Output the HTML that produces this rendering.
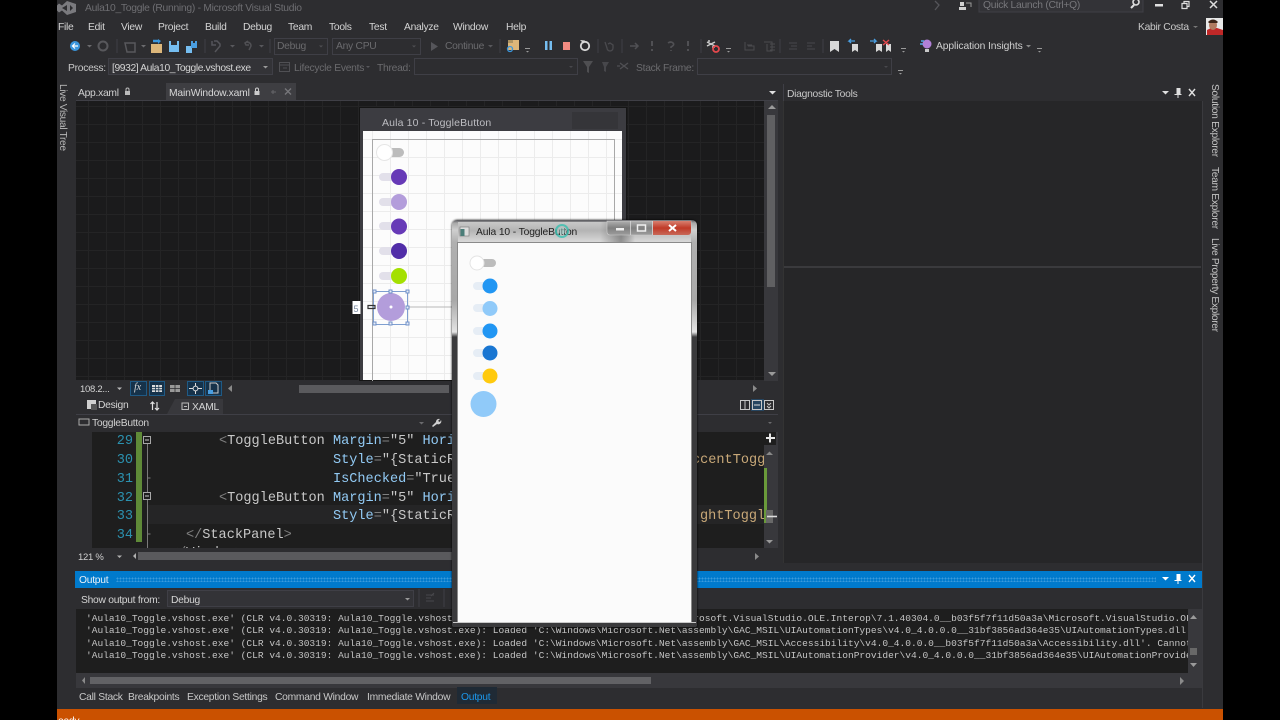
<!DOCTYPE html>
<html><head><meta charset="utf-8">
<style>
html,body{margin:0;padding:0;background:#000;width:1280px;height:720px;overflow:hidden}
#r{position:absolute;left:0;top:0;width:1280px;height:720px;overflow:hidden;background:#000;filter:blur(.35px);font-family:"Liberation Sans",sans-serif;font-size:10.3px;letter-spacing:-.27px;color:#d4d4d4}
.a{position:absolute}
.t{position:absolute;white-space:pre;line-height:14px;margin-top:1.500px}
.d{color:#6b6b6e}
.v{position:absolute;writing-mode:vertical-rl;white-space:pre;line-height:12px;color:#c4c4c4}
.m{position:absolute;white-space:pre;font-family:"Liberation Mono",monospace;font-size:13.57px;letter-spacing:0;line-height:19px;color:#c8c8c8;margin-top:1px}
.o{position:absolute;left:86px;white-space:pre;font-family:"Liberation Mono",monospace;font-size:9.55px;letter-spacing:0;line-height:12px;color:#c4c4c4;margin-top:.7px}
.b{color:#92caf4}.g{color:#808080}.n{color:#2b91af;text-align:right;width:30px;left:103px}
.y{color:#c8a878}
svg{position:absolute;overflow:visible}
</style></head><body><div id="r">

<div class="a" style="left:57px;top:0;width:1166px;height:710px;background:#2d2d30"></div>
<div class="a" style="left:57px;top:709px;width:1166px;height:11px;background:#ca5100"></div>
<div class="t" style="left:58px;top:713px;color:#fff">eady</div>

<!-- title -->
<svg style="left:0;top:0" width="1280" height="720">
<path d="M59 3.500l3 2 5-4.500 9 3v8l-9 3-5-4.500-3 2-2-2v-5zM62 8l5 3v-6zM70 5v6l3-3z" fill="#7a7a7e" fill-rule="evenodd"/>
<path d="M935 1l4 4-4 5" fill="none" stroke="#55555a" stroke-width="1.300"/>
<rect x="960" y="2" width="4" height="4" fill="#cfcfcf"/><path d="M959 10v-3h7v3z" fill="#cfcfcf"/><path d="M966 3h5v4" stroke="#9a9a9a" fill="none"/>
<rect x="979" y="-1" width="164" height="13" fill="#333337" stroke="#3f3f46"/>
<circle cx="1136" cy="2" r="3" fill="none" stroke="#ddd" stroke-width="1.600"/><path d="M1134 5l-3 3" stroke="#ddd" stroke-width="2"/>
<rect x="1155" y="4" width="8" height="2.500" fill="#e0e0e0"/>
<path d="M1182 3.500h5v5h-5zM1184 3.500v-2h5v5h-2" fill="none" stroke="#ddd" stroke-width="1.200"/>
<path d="M1210 1l7 7M1217 1l-7 7" stroke="#ddd" stroke-width="1.500"/>
</svg>
<div class="t" style="left:85px;top:0;color:#6e6e72">Aula10_Toggle (Running) - Microsoft Visual Studio</div>
<div class="t" style="left:983px;top:-3px;color:#77777b">Quick Launch (Ctrl+Q)</div>

<!-- menu -->
<div class="t" style="left:58px;top:19px">File</div>
<div class="t" style="left:88px;top:19px">Edit</div>
<div class="t" style="left:121px;top:19px">View</div>
<div class="t" style="left:158px;top:19px">Project</div>
<div class="t" style="left:205px;top:19px">Build</div>
<div class="t" style="left:243px;top:19px">Debug</div>
<div class="t" style="left:288px;top:19px">Team</div>
<div class="t" style="left:329px;top:19px">Tools</div>
<div class="t" style="left:369px;top:19px">Test</div>
<div class="t" style="left:404px;top:19px">Analyze</div>
<div class="t" style="left:453px;top:19px">Window</div>
<div class="t" style="left:506px;top:19px">Help</div>
<div class="t" style="left:1138px;top:19px;color:#c8c8c8">Kabir Costa</div>
<svg style="left:0;top:0" width="1280" height="720">
<path d="M1193 26h5l-2.500 2z" fill="#777"/>
<rect x="1206" y="18" width="17" height="17" fill="#e8e8e8"/>
<path d="M1207 35v-5l4-2h6l6 2v5z" fill="#c02828"/><ellipse cx="1213" cy="25" rx="4" ry="5" fill="#b07a60"/><path d="M1208 22q5-5 10 0l-1 1h-8z" fill="#3c2418"/>
</svg>

<!-- toolbar 1 -->
<svg style="left:0;top:0" width="1280" height="720">
<circle cx="75" cy="46" r="5" fill="#3a96dd"/><path d="M78 46h-5M75 43.500l-2.500 2.500 2.500 2.500" stroke="#fff" stroke-width="1.200" fill="none"/>
<path d="M87 45h5l-2.500 2.500z" fill="#6b6b6e"/>
<circle cx="103" cy="46" r="4.500" fill="none" stroke="#58585c" stroke-width="2"/>
<path d="M117 39v14" stroke="#3f3f46"/>
<path d="M125 43h10v9h-8z" fill="none" stroke="#58585c" stroke-width="1.500"/>
<path d="M141 45h5l-2.500 2.500z" fill="#6b6b6e"/>
<path d="M151 44h11v9h-11z" fill="#dcb67a"/><path d="M153 41h6" stroke="#3a96dd" stroke-width="2.500"/><path d="M158 39l3 2-3 3" fill="#3a96dd"/>
<path d="M169 41h10v11h-10z" fill="#75bdf0"/><rect x="171" y="41" width="6" height="4" fill="#2d2d30"/>
<path d="M186 46h6v7h-6z" fill="#75bdf0"/><path d="M191 41h6v7h-6z" fill="#4a9ee0"/><rect x="193" y="41" width="2" height="2" fill="#2d2d30"/>
<path d="M205 39v14" stroke="#3f3f46"/>
<path d="M214 41h3l3 3v2l-5 6M212 41l0 4 4 0" fill="none" stroke="#55555a" stroke-width="1.500"/>
<path d="M230 45h5l-2.500 2.500z" fill="#58585c"/>
<path d="M248 41l-3 2 1 2h3M246 42q5 0 5 4l-2 4" fill="none" stroke="#505054" stroke-width="1.500"/>
<path d="M259 45h5l-2.500 2.500z" fill="#58585c"/>
<path d="M270 39v14" stroke="#3f3f46"/>
<rect x="274.500" y="38.500" width="53" height="16" fill="#2d2d30" stroke="#3f3f46"/>
<path d="M319 45.500h4l-2 2z" fill="#4f4f52"/>
<rect x="332.500" y="38.500" width="88" height="16" fill="#2d2d30" stroke="#3f3f46"/>
<path d="M412 45.500h4l-2 2z" fill="#4f4f52"/>
<path d="M431 42v9l7-4.500z" fill="#55555a"/>
<path d="M488 45h5l-2.500 2.500z" fill="#58585c"/>
<path d="M500 39v14" stroke="#3f3f46"/>
<rect x="508" y="40" width="11" height="10" fill="#dcb67a"/><path d="M508 40h5v3h-5z" fill="#ad9362"/>
<circle cx="510" cy="49" r="2.500" fill="none" stroke="#3a96dd" stroke-width="1.300"/>
<path d="M525 48h5v1h-5zM526 51h3l-1.500 1.500z" fill="#9a9a9a"/>
<rect x="545" y="41" width="2.500" height="9" fill="#75bdf0"/><rect x="549.500" y="41" width="2.500" height="9" fill="#75bdf0"/>
<rect x="563" y="42" width="7" height="8" fill="#f28b82"/>
<circle cx="585" cy="46" r="4.200" fill="none" stroke="#d8d8d8" stroke-width="1.800"/><path d="M580 40l5 .5-1.500 3z" fill="#d8d8d8"/>
<path d="M598 39v14" stroke="#3f3f46"/>
<path d="M605 42l2 6a3 3 0 0 0 6 0v-3l-3-2-2 1" fill="none" stroke="#4a4a4e" stroke-width="1.300"/>
<path d="M622 39v14" stroke="#3f3f46"/>
<path d="M630 46h8M635 43l3 3-3 3" fill="none" stroke="#505054" stroke-width="1.500"/>
<path d="M652 41v5M651 50h2" stroke="#505054" stroke-width="2"/>
<path d="M668 43q3-2 5 0t-2 4v1M671 50v1" stroke="#505054" stroke-width="1.600" fill="none"/>
<path d="M688 41v5M687 50h2" stroke="#505054" stroke-width="2"/>
<path d="M701 39v14" stroke="#3f3f46"/>
<path d="M707 42l8 4M707 46l8-4M708 41h2M712 47h3" stroke="#cdcdcd" stroke-width="1.400" fill="none"/>
<circle cx="716" cy="49" r="3" fill="none" stroke="#e5484d" stroke-width="1.800"/>
<path d="M726 48h5v1h-5zM727 51h3l-1.500 1.500z" fill="#9a9a9a"/>
<path d="M745 42v8h9v-4h-6M747 45h5" fill="none" stroke="#4a4a4e"/>
<path d="M764 42h8v9h-5v-7M770 44h5M770 47h5M770 50h5" fill="none" stroke="#4a4a4e"/>
<path d="M780 39v14" stroke="#3f3f46"/>
<path d="M789 43h8M791 46h6M789 49h8M807 43h8M807 46h5M807 49h8" stroke="#48484c" fill="none"/>
<path d="M823 39v14" stroke="#3f3f46"/>
<path d="M830 41h9v11l-4.500-3-4.500 3z" fill="#d8d8d8"/>
<path d="M852 44h6v8l-3-2-3 2z" fill="#d8d8d8"/><path d="M855 41h-6l2-2M849 41l2 2" stroke="#4a9ee0" stroke-width="1.300" fill="none"/>
<path d="M876 44h6v8l-3-2-3 2z" fill="#d8d8d8"/><path d="M870 41h6l-2-2M876 41l-2 2" stroke="#4a9ee0" stroke-width="1.300" fill="none"/>
<path d="M886 44h5v8l-2.500-2-2.500 2z" fill="#d8d8d8"/><path d="M883 40l6 5M889 40l-6 5" stroke="#e5484d" stroke-width="1.400"/>
<path d="M901 48h5v1h-5zM902 51h3l-1.500 1.500z" fill="#9a9a9a"/>
<circle cx="927" cy="44" r="4.500" fill="#b180d7"/><path d="M925 49h4v3h-4z" fill="#c8c8c8"/><path d="M921 41h3M920 44h3" stroke="#5aa9e6" stroke-width="1.400"/>
<path d="M1026 45h5l-2.500 2.500z" fill="#8a8a8a"/><path d="M1037 48h5v1h-5zM1038 51h3l-1.500 1.500z" fill="#9a9a9a"/>
</svg>
<div class="t" style="left:277px;top:38.500px" ><span class="d">Debug</span></div>
<div class="t" style="left:336px;top:38.500px"><span class="d">Any CPU</span></div>
<div class="t" style="left:445px;top:38.500px"><span class="d">Continue</span></div>
<div class="t" style="left:936px;top:38.500px;color:#cfcfcf;letter-spacing:-.1px">Application Insights</div>

<!-- toolbar 2 -->
<div class="t" style="left:68px;top:60px;color:#c8c8c8">Process:</div>
<svg style="left:0;top:0" width="1280" height="720">
<rect x="108.500" y="58.500" width="164" height="16" fill="#333337" stroke="#3f3f46"/>
<path d="M263 66h5l-2.500 2.500z" fill="#9a9a9a"/>
<path d="M279.500 62.500h10v9h-10zM280 65h9M287 68h-4" fill="none" stroke="#505054"/>
<path d="M366 66h4l-2 2z" fill="#58585c"/>
<rect x="414.500" y="58.500" width="163" height="16" fill="#2d2d30" stroke="#3f3f46"/>
<path d="M569 66h4l-2 2z" fill="#48484c"/>
<path d="M583 61h10l-4 6v6l-2-1v-5z" fill="#4f4f52"/>
<path d="M602 62h7l-3 5v5l-2-1v-4zM600 65l4-4" fill="#47474b"/>
<path d="M620 63l8 6M620 69l8-6M620 66l-3 0" stroke="#505054" stroke-width="1.300" fill="none"/>
<rect x="697.500" y="58.500" width="194" height="16" fill="#2d2d30" stroke="#3f3f46"/>
<path d="M884 66h4l-2 2z" fill="#48484c"/>
<path d="M898 70h5v1h-5zM899 73h3l-1.500 1.500z" fill="#9a9a9a"/>
</svg>
<div class="t" style="left:112px;top:60px;color:#d4d4d4;letter-spacing:-.4px">[9932] Aula10_Toggle.vshost.exe</div>
<div class="t" style="left:294px;top:60px"><span class="d">Lifecycle Events</span></div>
<div class="t" style="left:377px;top:60px"><span class="d">Thread:</span></div>
<div class="t" style="left:636px;top:60px"><span class="d">Stack Frame:</span></div>

<!-- left strip -->
<div class="v" style="left:56px;top:84px;color:#b8b8b8;letter-spacing:-.4px">Live Visual Tree</div>
<!-- right strip -->
<div class="a" style="left:1202px;top:84px;width:1px;height:624px;background:#3a3a3e"></div>
<div class="v" style="left:1208px;top:84px;letter-spacing:-.33px">Solution Explorer</div>
<div class="v" style="left:1208px;top:167px;letter-spacing:-.35px">Team Explorer</div>
<div class="v" style="left:1208px;top:238px;letter-spacing:-.37px">Live Property Explorer</div>

<!-- doc tabs -->
<div class="a" style="left:166px;top:83px;width:130px;height:17px;background:#3e3e42"></div>
<div class="a" style="left:76px;top:100px;width:702px;height:1px;background:#3f3f46"></div>
<div class="t" style="left:78px;top:85px;color:#d0d0d0">App.xaml</div>
<div class="t" style="left:169px;top:85px;color:#d8d8d8;letter-spacing:-.15px">MainWindow.xaml</div>
<svg style="left:0;top:0" width="1280" height="720">
<rect x="125" y="91" width="5" height="4" fill="#bbb"/><path d="M126 91v-1.500a1.500 1.500 0 0 1 3 0v1.500" fill="none" stroke="#bbb"/>
<rect x="254.500" y="91" width="5" height="4" fill="#ccc"/><path d="M255.500 91v-1.500a1.500 1.500 0 0 1 3 0v1.500" fill="none" stroke="#ccc"/>
<path d="M271 92h5M273 90v4" stroke="#66666a"/>
<path d="M285 88.500l6 6M291 88.500l-6 6" stroke="#77777b" stroke-width="1.300"/>
<path d="M769 91h7l-3.500 3.500z" fill="#e0e0e0"/>
</svg>

<!-- designer -->
<div class="a" style="left:76px;top:101px;width:688px;height:279px;background-color:#1b1b1c;background-image:linear-gradient(#242425 1px,transparent 1px),linear-gradient(90deg,#242425 1px,transparent 1px),linear-gradient(#2c2c2d 1px,transparent 1px),linear-gradient(90deg,#2c2c2d 1px,transparent 1px);background-size:18px 18px,18px 18px,72px 72px,72px 72px;background-position:8px 5px,12px 5px,8px 5px,12px 5px"></div>
<!-- designer vscroll -->
<div class="a" style="left:764px;top:101px;width:14px;height:280px;background:#38383c"></div>
<div class="a" style="left:767px;top:115px;width:8px;height:172px;background:#606062"></div>
<svg style="left:0;top:0" width="1280" height="720">
<path d="M768 109h8l-4-4z" fill="#9a9a9a"/><path d="M768 372h8l-4 4z" fill="#9a9a9a"/>
</svg>
<!-- designer window -->
<div class="a" style="left:360px;top:108px;width:266px;height:272px;background:#3c3c41;box-shadow:0 0 0 1px #151515"></div>
<div class="t" style="left:382px;top:114px;color:#bdbdc2;font-size:10.5px;letter-spacing:.15px">Aula 10 - ToggleButton</div>
<div class="a" style="left:572px;top:112px;width:46px;height:17px;background:#353539"></div>
<div class="a" style="left:363px;top:131px;width:259px;height:249px;background-color:#fcfcfc;background-image:linear-gradient(#ececec 1px,transparent 1px),linear-gradient(90deg,#ececec 1px,transparent 1px),linear-gradient(#dcdcdc 1px,transparent 1px),linear-gradient(90deg,#dcdcdc 1px,transparent 1px);background-size:18px 18px,18px 18px,72px 72px,72px 72px;background-position:9px 8px,9px 8px,9px 8px,9px 8px"></div>
<div class="a" style="left:372px;top:139px;width:241px;height:242px;border:1px solid #a8a8a8;border-bottom:0;box-sizing:content-box"></div>
<svg style="left:0;top:0" width="1280" height="720">
<rect x="377" y="148" width="27" height="9" rx="4.500" fill="#bcbcbc"/>
<circle cx="384.500" cy="152.500" r="8" fill="#fff" stroke="#e6e6e6"/>
<g fill="#e2e0ea">
<rect x="379" y="173" width="16" height="8" rx="4"/><rect x="379" y="198" width="16" height="8" rx="4"/><rect x="379" y="222" width="16" height="8" rx="4"/><rect x="379" y="247" width="16" height="8" rx="4"/><rect x="379" y="272" width="16" height="8" rx="4"/>
</g>
<circle cx="399" cy="177" r="8" fill="#673ab7"/>
<circle cx="399" cy="202" r="8" fill="#b39ddb"/>
<circle cx="399" cy="226.500" r="8" fill="#673ab7"/>
<circle cx="399" cy="251" r="8" fill="#512da8"/>
<circle cx="399" cy="276" r="8" fill="#a4e000"/>
<path d="M408 307h60" stroke="#b8b8b8"/>
<circle cx="391" cy="307" r="14" fill="#b39ddb"/>
<circle cx="391" cy="307" r="1.500" fill="#fff"/>
<path d="M373.500 291.500h34v33h-34z" fill="none" stroke="#7f9fd0"/>
<g fill="#e8eef8" stroke="#6f90c8"><rect x="373" y="290" width="3" height="3"/><rect x="389" y="290" width="3" height="3"/><rect x="406" y="290" width="3" height="3"/><rect x="406" y="306" width="3" height="3"/><rect x="373" y="322" width="3" height="3"/><rect x="389" y="322" width="3" height="3"/><rect x="406" y="322" width="3" height="3"/></g>
<rect x="352.500" y="301" width="8" height="13" fill="#fff"/>
<path d="M368 305.500h7v3h-7z" fill="none" stroke="#333" stroke-width="1.200"/>
</svg>
<div class="t" style="left:353.500px;top:300px;color:#7a8aa0;font-size:9px">5</div>

<!-- zoom row -->
<div class="a" style="left:76px;top:381px;width:702px;height:14px;background:#2d2d30"></div>
<div class="t" style="left:80px;top:381px;font-size:9.5px">108.2...</div>
<svg style="left:0;top:0" width="1280" height="720">
<path d="M117 387.500h5l-2.500 2.500z" fill="#b8b8b8"/>
<g fill="#16324a" stroke="#1f5a85"><rect x="130.500" y="381.500" width="16" height="14"/><rect x="149.500" y="381.500" width="15" height="14"/><rect x="187.500" y="381.500" width="16" height="14"/><rect x="205.500" y="381.500" width="16" height="14"/></g>
<path d="M152 385h10v7h-10z" fill="#ddd"/><path d="M152 387.500h10M152 389.800h10M155.500 385v7M158.800 385v7" stroke="#16324a" stroke-width=".8"/>
<path d="M170 385h10v7h-10z" fill="#999"/><path d="M170 388.500h10M175 385v7" stroke="#2d2d30" stroke-width=".8"/>
<path d="M189 388.500h13M195.500 383v11" stroke="#ddd"/><circle cx="195.500" cy="388.500" r="2.400" fill="#16324a" stroke="#ddd"/>
<path d="M210 383h6l2 2v8h-8z" fill="none" stroke="#ccc"/><rect x="208" y="390" width="5" height="4" fill="#4a9ee0"/>
<path d="M232 385v7l-4-3.500z" fill="#8a8a8a"/>
<path d="M753 385v7l4-3.500z" fill="#8a8a8a"/>
</svg>
<div class="t" style="left:134px;top:379px;font-family:'Liberation Serif',serif;font-style:italic;color:#d8d8d8">fx</div>
<div class="a" style="left:299px;top:385px;width:150px;height:8px;background:#5a5a5d"></div>

<!-- design/xaml -->
<svg style="left:0;top:0" width="1280" height="720">
<path d="M167 414l8-15h48v15z" fill="#38383c"/>
<path d="M76 414.500h702" stroke="#3f3f46"/>
<path d="M87 400h9v9h-9z" fill="#cfcfcf"/><path d="M91 404h6v6h-6z" fill="#555" />
<path d="M152.500 402v8M150.500 404l2-2 2 2M157 402v8M155 408l2 2 2-2" stroke="#e0e0e0" fill="none" stroke-width="1.200"/>
<rect x="182" y="403" width="6.500" height="6.500" fill="none" stroke="#bbb"/><path d="M184 406.500h3" stroke="#bbb"/>
<g fill="none" stroke="#c8c8c8"><rect x="740.500" y="400.500" width="9" height="9"/><rect x="764.500" y="400.500" width="9" height="9"/></g>
<rect x="751" y="399" width="13" height="12" fill="#264560"/><rect x="752.500" y="400.500" width="9" height="9" fill="none" stroke="#c8c8c8"/><path d="M754 405h6" stroke="#ddd"/><path d="M745 401v8" stroke="#c8c8c8"/><path d="M767 403l2 2 2-2M767 406l2 2 2-2" stroke="#c8c8c8" fill="none"/>
<rect x="79" y="419" width="10" height="6" fill="none" stroke="#aaa"/>
<path d="M419 422h5l-2.500 2.500zM768 422h4l-2 2z" fill="#6a6a6d"/>
<path d="M432 426l4-4a3 3 0 0 1 4-3l-2 2 2 1 1-2a3 3 0 0 1-4 4l-4 3z" fill="#d0d0d0"/>
</svg>
<div class="t" style="left:98px;top:397px;color:#d4d4d4">Design</div>
<div class="t" style="left:192px;top:399px;color:#d4d4d4">XAML</div>
<div class="t" style="left:92px;top:415px;color:#d0d0d0">ToggleButton</div>

<!-- code -->
<div class="a" style="left:92px;top:432px;width:672px;height:116px;background:#1e1e1e;overflow:hidden">
 <div class="a" style="left:56px;top:73px;width:620px;height:19px;background:#252526"></div>
 <div class="a" style="left:44px;top:0;width:6px;height:110px;background:#5f8a38"></div>
</div>
<div class="a" style="left:92px;top:432px;width:672px;height:116px;overflow:hidden">
 <div class="m n" style="left:11px;top:-1px">29</div>
 <div class="m n" style="left:11px;top:18px">30</div>
 <div class="m n" style="left:11px;top:36.500px">31</div>
 <div class="m n" style="left:11px;top:55.500px">32</div>
 <div class="m n" style="left:11px;top:74px">33</div>
 <div class="m n" style="left:11px;top:93px">34</div>
 <div class="m" style="left:127px;top:-1px"><span class="g">&lt;</span>ToggleButton <span class="b">Margin</span><span class="g">=</span>"5" <span class="b">HorizontalAlignment</span></div>
 <div class="m" style="left:241px;top:18px"><span class="b">Style</span><span class="g">=</span>"{StaticResource</div>
 <div class="m" style="left:241px;top:36.500px"><span class="b">IsChecked</span><span class="g">=</span>"True"</div>
 <div class="m" style="left:127px;top:55.500px"><span class="g">&lt;</span>ToggleButton <span class="b">Margin</span><span class="g">=</span>"5" <span class="b">HorizontalAlignment</span></div>
 <div class="m" style="left:241px;top:74px"><span class="b">Style</span><span class="g">=</span>"{StaticResource</div>
 <div class="m" style="left:94px;top:93px"><span class="g">&lt;/</span>StackPanel<span class="g">&gt;</span></div>
 <div class="m" style="left:78px;top:111px"><span class="g">&lt;/</span>Window<span class="g">&gt;</span></div>
 <div class="m y" style="left:600px;top:18px">ccentToggl</div>
 <div class="m y" style="left:608px;top:74px">ghtToggl</div>
</div>
<svg style="left:0;top:0" width="1280" height="720">
<path d="M147.500 436v112M147.500 478h3M147.500 534h3" stroke="#7a7a7a"/>
<g fill="#1e1e1e" stroke="#a8a8a8"><rect x="143.500" y="436.500" width="7" height="7"/><rect x="143.500" y="492.500" width="7" height="7"/></g>
<path d="M145 440h4M145 496h4" stroke="#c8c8c8"/>
<rect x="764" y="432" width="14" height="116" fill="#38383c"/>
<rect x="764" y="432" width="12" height="13" fill="#1e1e1e"/>
<path d="M770 433.500v9M766 438h9" stroke="#e8e8e8" stroke-width="2"/>
<path d="M766 455h7l-3.500-3.500z" fill="#888"/><path d="M766 540h7l-3.500 3.500z" fill="#999"/>
<rect x="764" y="468" width="3" height="55" fill="#6a9a3a"/>
<rect x="766" y="510" width="7" height="13" fill="#686868"/>
<path d="M767 516.500h10" stroke="#ddd" stroke-width="1.600"/>
</svg>
<!-- code hscroll -->
<div class="t" style="left:78px;top:549px;font-size:9.5px;color:#d0d0d0">121 %</div>
<svg style="left:0;top:0" width="1280" height="720">
<path d="M117 555.500h5l-2.500 2.500zM136 553v6l-3-3z" fill="#b0b0b0"/>
<path d="M755 553v7l4-3.500z" fill="#8a8a8a"/>
</svg>
<div class="a" style="left:138px;top:552px;width:315px;height:8px;background:#5a5a5d"></div>
<div class="a" style="left:76px;top:563px;width:1126px;height:8px;background:#2d2d30"></div>

<!-- diagnostic -->
<div class="a" style="left:783px;top:84px;width:419px;height:17px;background:#2d2d30;border-left:1px solid #3f3f46"></div>
<div class="t" style="left:787px;top:86px;color:#c8c8c8">Diagnostic Tools</div>
<div class="a" style="left:783px;top:101px;width:418px;height:462px;background:#262628;border-left:1px solid #333"></div>
<div class="a" style="left:784px;top:266px;width:417px;height:2px;background:#3a3a3d"></div>
<svg style="left:0;top:0" width="1280" height="720">
<path d="M1162 91h7l-3.500 3.500z" fill="#e0e0e0"/>
<path d="M1176.500 88h4v6h1v1h-3v3h-1v-3h-3v-1h2z" fill="#e0e0e0"/>
<path d="M1189 89l6 7M1195 89l-6 7" stroke="#e0e0e0" stroke-width="1.400"/>
</svg>

<!-- output -->
<div class="a" style="left:75px;top:571px;width:1127px;height:17px;background:#007acc"></div>
<div class="a" style="left:116px;top:577px;width:1040px;height:5px;background-image:radial-gradient(#3a9bdc 40%,transparent 50%);background-size:3px 3px"></div>
<div class="t" style="left:79px;top:572px;color:#e8f0f8">Output</div>
<svg style="left:0;top:0" width="1280" height="720">
<path d="M1162 577h7l-3.500 3.500z" fill="#fff"/>
<path d="M1176.500 574h4v6h1v1h-3v3h-1v-3h-3v-1h2z" fill="#fff"/>
<path d="M1189 575l6 7M1195 575l-6 7" stroke="#fff" stroke-width="1.400"/>
<rect x="167.500" y="590.500" width="246" height="16" fill="#333337" stroke="#3f3f46"/>
<path d="M405 598h5l-2.500 2.500z" fill="#9a9a9a"/>
<path d="M419 589v18" stroke="#3f3f46"/>
<path d="M426 595h8M426 598h5M426 601h8M434 593l-3 3" stroke="#48484c" fill="none"/>
<path d="M444 589v18" stroke="#3f3f46"/>
</svg>
<div class="t" style="left:81px;top:592px;color:#d4d4d4">Show output from:</div>
<div class="t" style="left:171px;top:592px;color:#d4d4d4">Debug</div>
<div class="a" style="left:76px;top:609px;width:1112px;height:64px;background:#1e1e1e;overflow:hidden">
 <div class="o" style="left:10px;top:3px">'Aula10_Toggle.vshost.exe' (CLR v4.0.30319: Aula10_Toggle.vshost.exe): Loaded 'C:\WINDOWS\assembly\GAC\Microsoft.VisualStudio.OLE.Interop\7.1.40304.0__b03f5f7f11d50a3a\Microsoft.VisualStudio.OLE.Interop.dll</div>
 <div class="o" style="left:10px;top:15.500px">'Aula10_Toggle.vshost.exe' (CLR v4.0.30319: Aula10_Toggle.vshost.exe): Loaded 'C:\Windows\Microsoft.Net\assembly\GAC_MSIL\UIAutomationTypes\v4.0_4.0.0.0__31bf3856ad364e35\UIAutomationTypes.dll</div>
 <div class="o" style="left:10px;top:28px">'Aula10_Toggle.vshost.exe' (CLR v4.0.30319: Aula10_Toggle.vshost.exe): Loaded 'C:\Windows\Microsoft.Net\assembly\GAC_MSIL\Accessibility\v4.0_4.0.0.0__b03f5f7f11d50a3a\Accessibility.dll'. Cannot find</div>
 <div class="o" style="left:10px;top:40px">'Aula10_Toggle.vshost.exe' (CLR v4.0.30319: Aula10_Toggle.vshost.exe): Loaded 'C:\Windows\Microsoft.Net\assembly\GAC_MSIL\UIAutomationProvider\v4.0_4.0.0.0__31bf3856ad364e35\UIAutomationProvider.dll</div>
</div>
<div class="a" style="left:1188px;top:609px;width:14px;height:65px;background:#38383c"></div>
<div class="a" style="left:76px;top:673px;width:1126px;height:15px;background:#38383c"></div>
<div class="a" style="left:90px;top:677px;width:561px;height:7px;background:#626265"></div>
<svg style="left:0;top:0" width="1280" height="720">
<path d="M1190 619h7l-3.500-4z" fill="#9a9a9a"/><path d="M1190 663h7l-3.500 4z" fill="#9a9a9a"/>
<rect x="1190" y="648" width="7" height="7" fill="#686868"/>
<path d="M85 677v7l-3-3.500zM1180 677v8l4-4z" fill="#8a8a8a"/>
</svg>

<!-- bottom tabs -->
<div class="a" style="left:457px;top:687px;width:40px;height:17px;background:#1f2a35"></div>
<div class="t" style="left:79px;top:689px;color:#c8c8c8">Call Stack</div>
<div class="t" style="left:128px;top:689px;color:#c8c8c8">Breakpoints</div>
<div class="t" style="left:187px;top:689px;color:#c8c8c8">Exception Settings</div>
<div class="t" style="left:275px;top:689px;color:#c8c8c8">Command Window</div>
<div class="t" style="left:367px;top:689px;color:#c8c8c8">Immediate Window</div>
<div class="t" style="left:461px;top:689px;color:#1c97ea">Output</div>

<!-- floating window -->
<div class="a" style="left:452px;top:220px;width:245px;height:407px;border-radius:5px 5px 2px 2px;background:linear-gradient(180deg,#55555a 0,#a8a8a8 3px,#cfcfcf 10px,#b0b0b0 22px,#a8a8a8 80px,#e4e4e4 112px,#3a3a3c 117px,#3a3a3c 100%);box-shadow:0 0 2px #000"></div>
<div class="a" style="left:458px;top:222px;width:233px;height:21px;background:linear-gradient(180deg,#c8c8c8,#b4b4b4 40%,#dcdcdc)"></div>
<div class="a" style="left:600px;top:222px;width:35px;height:21px;background:linear-gradient(90deg,transparent,rgba(60,60,60,.45) 60%,rgba(60,60,60,.25) 80%,transparent)"></div>
<div class="a" style="left:458px;top:243px;width:233px;height:379px;background:#fbfbfb;box-shadow:0 0 0 1px #8a8a8a"></div>
<div class="a" style="left:453px;top:622px;width:243px;height:1px;background:#c8c8c8"></div>
<div class="t" style="left:476px;top:224px;color:#222;letter-spacing:-.13px">Aula 10 - ToggleButton</div>
<svg style="left:0;top:0" width="1280" height="720">
<rect x="460" y="227" width="9" height="9" fill="#dcdcdc" stroke="#777" stroke-width=".6"/><rect x="460.500" y="229" width="4" height="7" fill="#4a7d78"/>
<circle cx="562" cy="231" r="6" fill="none" stroke="#2fbfae" stroke-width="2" opacity=".75"/>
<circle cx="562" cy="231" r="3.500" fill="#a8e0da" opacity=".5"/>
<defs><linearGradient id="gb" x1="0" y1="0" x2="0" y2="1"><stop offset="0" stop-color="#b0b0b0"/><stop offset=".5" stop-color="#808080"/><stop offset="1" stop-color="#9c9c9c"/></linearGradient>
<linearGradient id="gr" x1="0" y1="0" x2="0" y2="1"><stop offset="0" stop-color="#d88070"/><stop offset=".5" stop-color="#c03a28"/><stop offset="1" stop-color="#c86858"/></linearGradient></defs>
<path d="M607 221v11a3 3 0 0 0 3 3h78a3 3 0 0 0 3-3v-11z" fill="url(#gb)" stroke="#d0d0d0" stroke-width=".6"/>
<path d="M630.500 221v14M652.500 221v14" stroke="#d8d8d8" stroke-width=".8"/>
<path d="M653 221h38v11a3 3 0 0 1-3 3h-35z" fill="url(#gr)"/>
<rect x="616" y="228" width="8" height="2.500" fill="#f0f0f0"/>
<rect x="637.500" y="225" width="8" height="6" fill="none" stroke="#f0f0f0" stroke-width="1.500"/>
<path d="M669 225l7 6M676 225l-7 6" stroke="#fff" stroke-width="2"/>
<rect x="471" y="259" width="25" height="8" rx="4" fill="#bcbcbc"/>
<circle cx="477" cy="263" r="7" fill="#fff" stroke="#e4e4e4"/>
<g fill="#e6edf5">
<rect x="473" y="282" width="16" height="8" rx="4"/><rect x="473" y="304" width="16" height="8" rx="4"/><rect x="473" y="327" width="16" height="8" rx="4"/><rect x="473" y="349" width="16" height="8" rx="4"/><rect x="473" y="372" width="16" height="8" rx="4"/>
</g>
<circle cx="490" cy="286" r="7.500" fill="#2196f3"/>
<circle cx="490" cy="308.500" r="7.500" fill="#90caf9"/>
<circle cx="490" cy="331" r="7.500" fill="#2196f3"/>
<circle cx="490" cy="353" r="7.500" fill="#1976d2"/>
<circle cx="490" cy="376" r="7.500" fill="#ffca0e"/>
<circle cx="483.500" cy="404" r="13" fill="#90caf9"/>
</svg>
</div></body></html>
